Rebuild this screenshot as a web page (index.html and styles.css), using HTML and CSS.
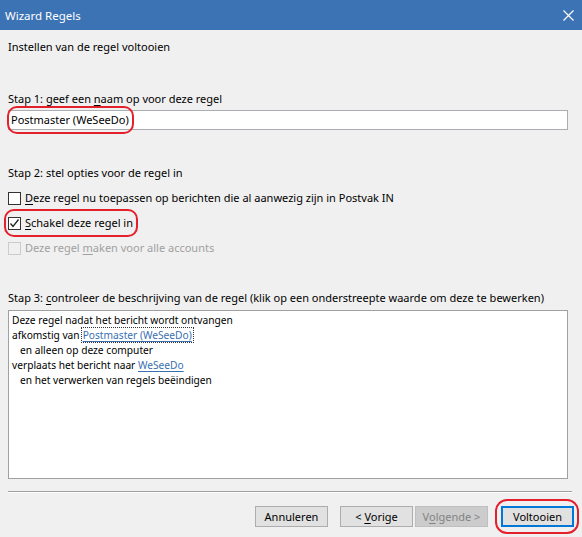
FILE: index.html
```html
<!DOCTYPE html>
<html lang="nl">
<head>
<meta charset="UTF-8">
<title>Wizard Regels</title>
<link rel="stylesheet" href="styles.css">
</head>
<body>

<div class="titlebar">
  <span class="title">Wizard Regels</span>
  <svg class="close" width="11" height="11" viewBox="0 0 11 11">
    <path d="M0.5 0.5 L10.5 10.5 M10.5 0.5 L0.5 10.5" stroke="#fff" stroke-width="1.2" fill="none"/>
  </svg>
</div>

<div class="content">
  <div class="heading">Instellen van de regel voltooien</div>

  <!-- Stap 1 -->
  <div class="label step1">Stap 1: geef een <u>n</u>aam op voor deze regel</div>
  <div class="textbox">
    <span class="mark">Postmaster (WeSeeDo)<span class="ring ring-name"></span></span>
  </div>

  <!-- Stap 2 -->
  <div class="label step2">Stap 2: stel opties voor de regel in</div>
  <div class="option">
    <span class="check"></span>
    <span><u>D</u>eze regel nu toepassen op berichten die al aanwezig zijn in Postvak IN</span>
  </div>
  <div class="option">
    <span class="mark">
      <span class="check checked">
        <svg width="11" height="11" viewBox="0 0 11 11"><path d="M1.5 5.5 L4 8.5 L9.5 1.5" stroke="#222" stroke-width="1.3" fill="none"/></svg>
      </span>
      <span><u>S</u>chakel deze regel in</span>
      <span class="ring ring-check"></span>
    </span>
  </div>
  <div class="option disabled">
    <span class="check"></span>
    <span>Deze regel <u>m</u>aken voor alle accounts</span>
  </div>

  <!-- Stap 3 -->
  <div class="label step3">Stap 3: <u>c</u>ontroleer de beschrijving van de regel (klik op een onderstreepte waarde om deze te bewerken)</div>
  <div class="description">
    <div>Deze regel nadat het bericht wordt ontvangen</div>
    <div>afkomstig van<a class="focus">Postmaster (WeSeeDo)</a></div>
    <div class="indent">en alleen op deze computer</div>
    <div>verplaats het bericht naar <a>WeSeeDo</a></div>
    <div class="indent">en het verwerken van regels beëindigen</div>
  </div>

  <div class="separator"></div>

  <div class="buttons">
    <button class="cancel">Annuleren</button>
    <button class="prev">&lt; <u>V</u>orige</button>
    <button class="next">V<u>o</u>lgende &gt;</button>
    <span class="mark finish">
      <button class="default">Voltooien</button>
      <span class="ring ring-finish"></span>
    </span>
  </div>
</div>

</body>
</html>
```

FILE: styles.css
```css
body {
  margin: 0;
  background-color: #f0f0f0;
  font-family: "Noto Sans", "Open Sans", sans-serif;
  font-size: 11px;
  color: #000;
  width: 582px;
  height: 537px;
  overflow: hidden;
}

u {
  text-decoration-thickness: 1px;
  text-underline-offset: 2px;
}

/* Title bar */
.titlebar {
  height: 30px;
  background-color: #3c73b4;
  display: flex;
  align-items: center;
  justify-content: space-between;
  padding: 0 8px 0 5px;
}

.title {
  color: #fff;
  font-size: 11.5px;
}

.close {
  display: block;
}

/* Content */
.content {
  padding: 0 8px;
  display: flex;
  flex-direction: column;
}

.heading,
.label,
.option {
  line-height: 16px;
  height: 16px;
}

.heading {
  margin-top: 9px;
}

.step1 {
  margin-top: 36px;
}

.textbox {
  margin-top: 3px;
  width: 556px;
  height: 18px;
  border: 1px solid #abadb3;
  background: #fff;
  padding-left: 2px;
  line-height: 18px;
  display: flex;
  align-items: center;
}

.step2 {
  margin-top: 35px;
}

.option {
  display: flex;
  align-items: center;
  gap: 4px;
  margin-top: 9px;
}

.check {
  width: 11px;
  height: 11px;
  border: 1px solid #333;
  background: #fff;
  display: flex;
  align-items: center;
  justify-content: center;
  flex: none;
}

.disabled {
  color: #a0a0a0;
}

.disabled .check {
  border-color: #cccccc;
  background: #f0f0f0;
}

.step3 {
  margin-top: 34px;
}

/* Rule description box, slightly smaller text */
.description {
  margin-top: 4px;
  width: 551px;
  height: 162px;
  border: 1px solid #a0a0a0;
  background: #fff;
  padding: 2px 4px 3px 3px;
  font-size: 10.2px;
  line-height: 15px;
  color: #000;
}

.description .indent {
  padding-left: 8px;
}

.description a {
  color: #3a6fb0;
  text-decoration: underline;
  text-underline-offset: 2px;
}

.description a.focus {
  outline: 1px dotted #333;
  outline-offset: 0;
  margin-left: 2px;
  padding: 0 1px;
}

.separator {
  margin-top: 12px;
  width: 564px;
  height: 1px;
  background: #a0a0a0;
  border-bottom: 1px solid #fff;
}

/* Buttons */
.buttons {
  margin-top: 13px;
  display: flex;
  padding-left: 247px;
}

button {
  flex: none;
  box-sizing: border-box;
  width: 73px;
  height: 21px;
  margin: 0;
  padding: 0;
  font-family: inherit;
  font-size: 11px;
  color: #000;
  background: #e1e1e1;
  border: 1px solid #adadad;
}

.prev {
  margin-left: 12px;
}

.next {
  margin-left: 2px;
  background: #cccccc;
  border-color: #bfbfbf;
  color: #838383;
}

.finish {
  margin-left: 13px;
}

.default {
  border: 2px solid #0078d7;
}

/* Red highlight rings */
.mark {
  position: relative;
  display: inline-flex;
  align-items: center;
  gap: 4px;
  flex: none;
}

.ring {
  position: absolute;
  border: 2px solid #e3202c;
  border-radius: 10px;
  pointer-events: none;
}

.ring-name {
  left: -4px;
  right: -5px;
  top: -5px;
  bottom: -5px;
}

.ring-check {
  left: -4px;
  right: -5px;
  top: -6px;
  bottom: -6px;
}

.ring-finish {
  left: -6px;
  right: -5px;
  top: -7px;
  bottom: -7px;
  border-radius: 12px;
}
```
